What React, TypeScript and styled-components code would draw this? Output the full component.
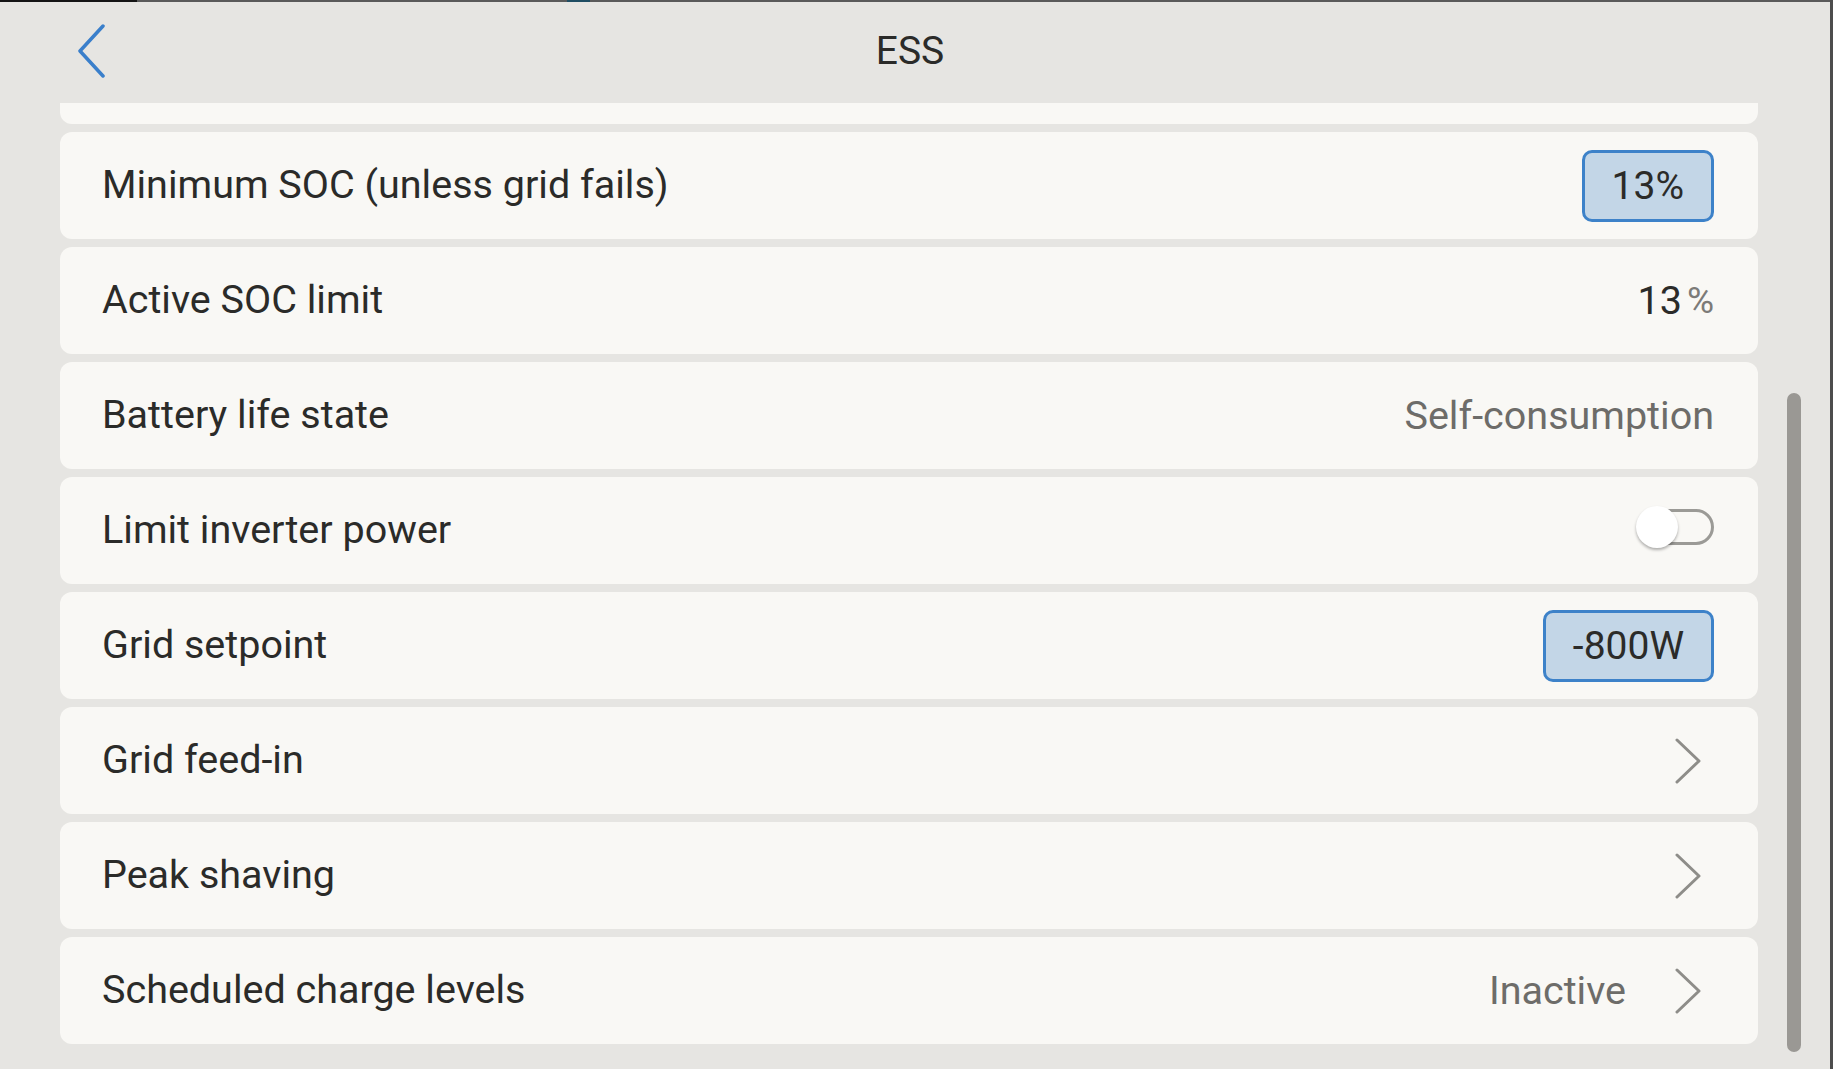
import React from 'react';
import styled, { createGlobalStyle } from 'styled-components';

const GlobalStyle = createGlobalStyle`
  html, body {
    margin: 0;
    padding: 0;
    background: #e6e5e2;
  }
  body {
    font-family: Roboto, 'Liberation Sans', sans-serif;
  }
`;

const Frame = styled.div`
  width: 1833px;
  height: 1069px;
  box-sizing: border-box;
  border-right: 3px solid #4d4d4d;
  background: #e6e5e2;
  display: flex;
  flex-direction: column;
  overflow: hidden;
`;

const TopStrip = styled.div`
  display: flex;
  height: 2px;
  flex-shrink: 0;
`;

const StripPart = styled.div<{ $w?: number; $color: string }>`
  background: ${(p) => p.$color};
  ${(p) => (p.$w ? `width: ${p.$w}px;` : 'flex: 1;')}
`;

const Header = styled.header`
  height: 101px;
  flex-shrink: 0;
  display: grid;
  grid-template-columns: 1fr auto 1fr;
  align-items: center;
  padding-right: 10px;
`;

const BackButton = styled.button`
  justify-self: start;
  margin-left: 77px;
  margin-bottom: 4px;
  padding: 0;
  border: none;
  background: none;
  display: flex;
  cursor: pointer;
`;

const Title = styled.h1`
  margin: 0 0 4px 0;
  font-weight: 400;
  font-size: 39px;
  color: #2b2b29;
`;

const Body = styled.div`
  flex: 1;
  display: flex;
  min-height: 0;
`;

const Viewport = styled.div`
  width: 1758px;
  padding-left: 60px;
  box-sizing: border-box;
  overflow: hidden;
`;

const List = styled.div`
  display: flex;
  flex-direction: column;
  gap: 8px;
  margin-top: -86px;
`;

const Row = styled.div`
  height: 107px;
  flex-shrink: 0;
  box-sizing: border-box;
  border-radius: 12px;
  background: #f9f8f5;
  padding: 0 44px 0 42px;
  display: flex;
  align-items: center;
  justify-content: space-between;
`;

const Label = styled.span`
  font-size: 39.5px;
  color: #2b2b29;
  margin-top: -2px;
`;

const Right = styled.div`
  display: flex;
  align-items: center;
`;

const Value = styled.span<{ $muted?: boolean }>`
  font-size: 39.5px;
  color: ${(p) => (p.$muted ? '#6d6c69' : '#2b2b29')};
`;

const Unit = styled.span`
  font-size: 37px;
  color: #7c7b78;
  margin-left: 5px;
`;

const Badge = styled.span`
  height: 72px;
  box-sizing: border-box;
  padding: 0 27px;
  border: 3px solid #3d82c9;
  border-radius: 10px;
  background: #c3d6e7;
  display: flex;
  align-items: center;
  font-size: 39px;
  color: #2b2b29;
`;

const Toggle = styled.span`
  position: relative;
  width: 76px;
  height: 36px;
  box-sizing: border-box;
  border: 3px solid #9b9a96;
  border-radius: 18px;
  margin-bottom: 7px;
`;

const Knob = styled.span`
  position: absolute;
  left: -5px;
  top: -6px;
  width: 42px;
  height: 42px;
  border-radius: 50%;
  background: #ffffff;
  box-shadow: 0 2px 3px rgba(0, 0, 0, 0.3);
`;

const Chevron = styled.svg<{ $alone?: boolean }>`
  margin-right: 13px;
  margin-left: ${(p) => (p.$alone ? 0 : 49)}px;
  flex-shrink: 0;
`;

const ScrollTrack = styled.div`
  flex: 1;
  display: flex;
  justify-content: flex-start;
  padding: 290px 0 0 29px;
`;

const Thumb = styled.div`
  width: 14px;
  height: 659px;
  border-radius: 7px;
  background: #9a9894;
`;

type Item = {
  label: string;
  kind?: 'badge' | 'unit' | 'text' | 'toggle' | 'link';
  value?: string;
  unit?: string;
};

// first entry is the row scrolled away under the header
const items: Item[] = [
  { label: '' },
  { label: 'Minimum SOC (unless grid fails)', kind: 'badge', value: '13%' },
  { label: 'Active SOC limit', kind: 'unit', value: '13', unit: '%' },
  { label: 'Battery life state', kind: 'text', value: 'Self-consumption' },
  { label: 'Limit inverter power', kind: 'toggle' },
  { label: 'Grid setpoint', kind: 'badge', value: '-800W' },
  { label: 'Grid feed-in', kind: 'link' },
  { label: 'Peak shaving', kind: 'link' },
  { label: 'Scheduled charge levels', kind: 'link', value: 'Inactive' },
];

const ChevronIcon = ({ alone }: { alone: boolean }) => (
  <Chevron $alone={alone} width="26" height="46" viewBox="0 0 26 46">
    <polyline points="2,2 24,23 2,44" fill="none" stroke="#8e8d89" strokeWidth="3" strokeLinecap="round" strokeLinejoin="round" />
  </Chevron>
);

const RowRight = ({ item }: { item: Item }) => {
  switch (item.kind) {
    case 'badge':
      return <Badge>{item.value}</Badge>;
    case 'unit':
      return (
        <Right>
          <Value>{item.value}</Value>
          <Unit>{item.unit}</Unit>
        </Right>
      );
    case 'text':
      return <Value $muted>{item.value}</Value>;
    case 'toggle':
      return (
        <Toggle>
          <Knob />
        </Toggle>
      );
    case 'link':
      return (
        <Right>
          {item.value && <Value $muted>{item.value}</Value>}
          <ChevronIcon alone={!item.value} />
        </Right>
      );
    default:
      return null;
  }
};

export default function App() {
  return (
    <>
      <GlobalStyle />
      <Frame>
        <TopStrip>
          <StripPart $w={137} $color="#141414" />
          <StripPart $w={430} $color="#5a5a5a" />
          <StripPart $w={23} $color="#1f4d63" />
          <StripPart $color="#5a5a5a" />
        </TopStrip>
        <Header>
          <BackButton aria-label="Back">
            <svg width="30" height="54" viewBox="0 0 30 54">
              <polyline points="26,2 3,27 26,52" fill="none" stroke="#3a7fcb" strokeWidth="3.5" strokeLinecap="round" strokeLinejoin="round" />
            </svg>
          </BackButton>
          <Title>ESS</Title>
          <div />
        </Header>
        <Body>
          <Viewport>
            <List>
              {items.map((item, i) => (
                <Row key={i}>
                  <Label>{item.label}</Label>
                  <RowRight item={item} />
                </Row>
              ))}
            </List>
          </Viewport>
          <ScrollTrack>
            <Thumb />
          </ScrollTrack>
        </Body>
      </Frame>
    </>
  );
}
